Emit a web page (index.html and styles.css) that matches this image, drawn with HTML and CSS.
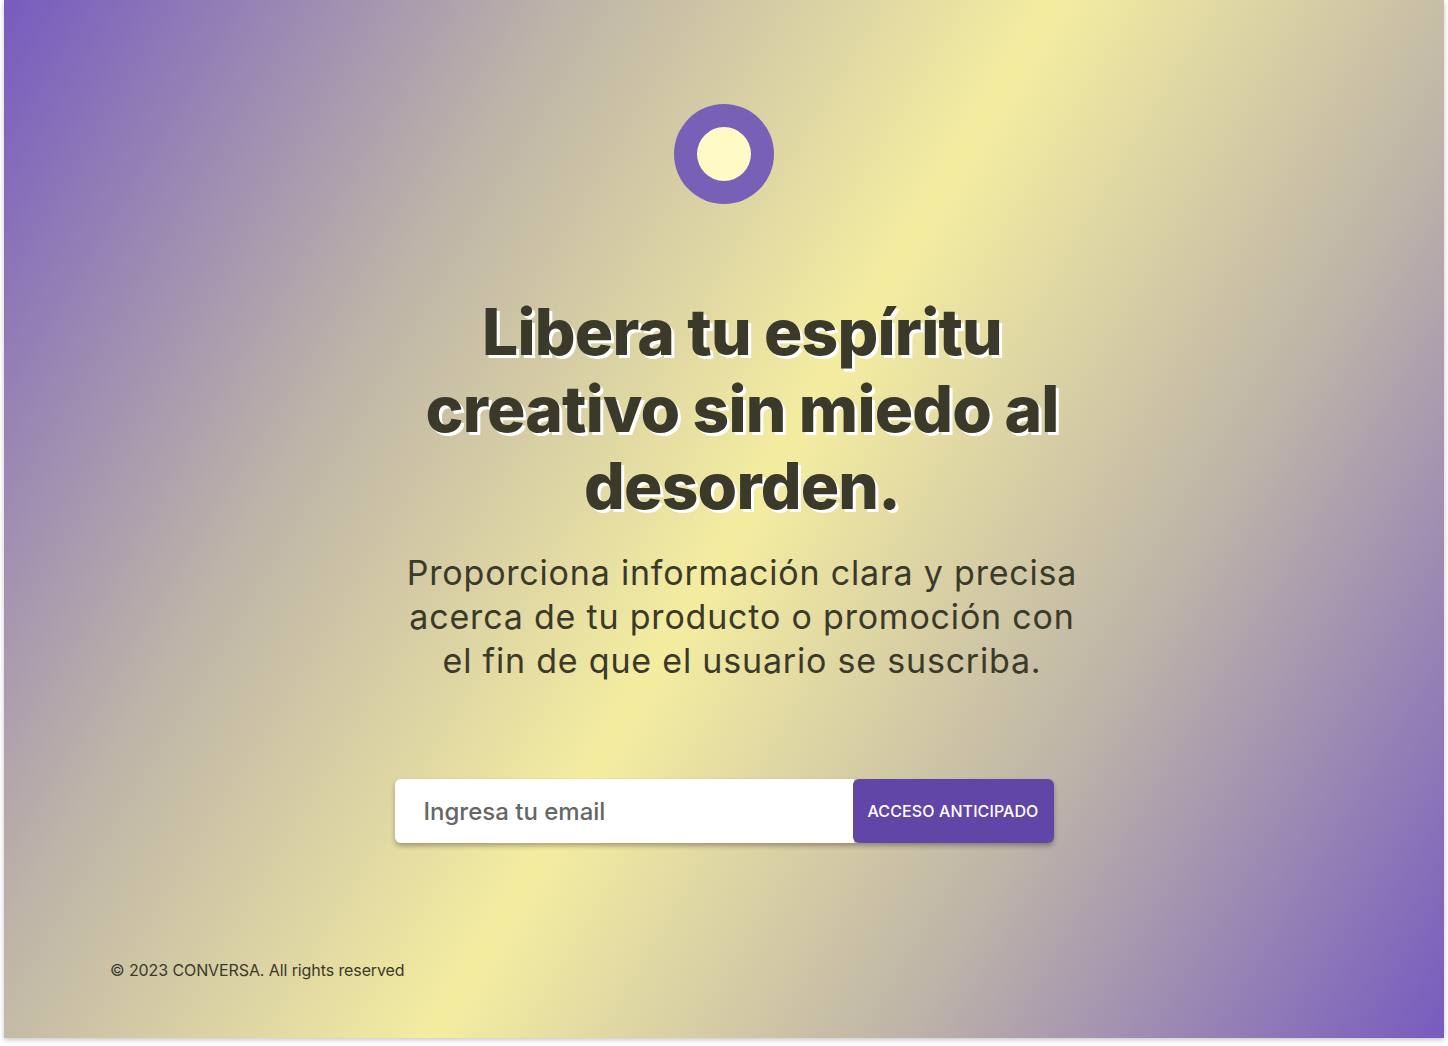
FILE: index.html
```html
<!DOCTYPE html>
<html lang="es">
<head>
<meta charset="utf-8">
<title>Conversa</title>
<link rel="stylesheet" href="styles.css">
</head>
<body>
<div class="page">
  <main class="card">
    <section class="hero">
      <div class="logo"><span class="logo-inner"></span></div>
      <h1 class="title">Libera tu espíritu<br>creativo sin miedo al<br>desorden.</h1>
      <p class="lead">Proporciona información clara y precisa acerca de tu producto o promoción con el fin de que el usuario se suscriba.</p>
      <form class="signup">
        <input class="email" type="email" placeholder="Ingresa tu email">
        <button class="cta" type="button">ACCESO ANTICIPADO</button>
      </form>
    </section>
    <footer class="footer">© 2023 CONVERSA. All rights reserved</footer>
  </main>
</div>
</body>
</html>
```
FILE: styles.css
```css
* { box-sizing: border-box; }
html, body { margin: 0; padding: 0; background: #ffffff; }
body { font-family: Inter, "Noto Sans", sans-serif; color: #3b3929; }

.page { padding: 0 4px 8px 4px; }

.card {
  height: 1038px;
  background: linear-gradient(121deg, #775bbf 0%, #bdb3a8 27%, #f4eda0 51%, #bdb3a8 74%, #775bbf 100%);
  box-shadow: 0 2px 5px rgba(0,0,0,0.22);
  display: flex;
  flex-direction: column;
}

.hero {
  display: flex;
  flex-direction: column;
  align-items: center;
  padding-top: 104px;
}

.logo {
  width: 100px;
  height: 100px;
  border-radius: 50%;
  background: #7760b5;
  display: flex;
  align-items: center;
  justify-content: center;
}
.logo-inner {
  width: 54px;
  height: 54px;
  border-radius: 50%;
  background: #fffac6;
}

.title {
  margin: 89px 0 0 36px;
  font-size: 64px;
  line-height: 77px;
  font-weight: 800;
  letter-spacing: -0.8px;
  text-align: center;
  color: #3b3929;
  text-shadow: 3px 3px 0 #ffffff;
}

.lead {
  margin: 27px 0 0 36px;
  width: 700px;
  font-size: 34px;
  line-height: 44px;
  font-weight: 400;
  letter-spacing: 0.8px;
  text-align: center;
  color: #3b3929;
}

.signup {
  margin-top: 96px;
  display: flex;
  width: 659px;
  height: 64px;
  box-shadow: 0 3px 5px rgba(0,0,0,0.3);
  border-radius: 6px;
}
.email {
  flex: 1;
  border: none;
  border-radius: 6px 0 0 6px;
  background: #ffffff;
  padding: 0 0 0 29px;
  font-family: Inter, "Noto Sans", sans-serif;
  font-size: 24px;
  font-weight: 500;
  color: #666;
  outline: none;
}
.email::placeholder { color: #666666; }
.cta {
  width: 201px;
  border: none;
  border-radius: 6px;
  background: #6146a8;
  color: #ffffff;
  font-family: Inter, "Noto Sans", sans-serif;
  font-size: 16px;
  font-weight: 500;
  letter-spacing: 0.1px;
  margin-left: -1px;
}

.footer {
  margin-top: auto;
  padding: 0 0 58px 106px;
  font-size: 16px;
  line-height: 20px;
  letter-spacing: -0.1px;
  color: #3b3929;
}
```
